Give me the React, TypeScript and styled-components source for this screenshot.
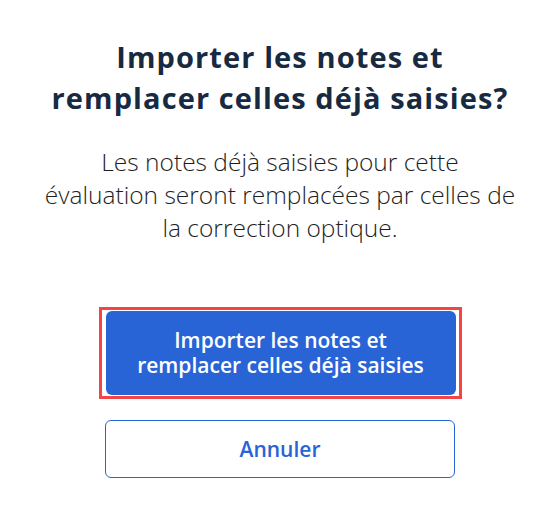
import styled, { createGlobalStyle } from 'styled-components';

const GlobalStyle = createGlobalStyle`
  html, body {
    margin: 0;
    padding: 0;
    background: #ffffff;
  }
  body {
    font-family: "Open Sans", "Liberation Sans", sans-serif;
  }
`;

const App = () => {
  return (
    <>
      <GlobalStyle />
      <Dialog>
        <Title>
          Importer les notes et
          <br />
          remplacer celles déjà saisies?
        </Title>
        <Message>
          Les notes déjà saisies pour cette
          <br />
          évaluation seront remplacées par celles de
          <br />
          la correction optique.
        </Message>
        <Actions>
          <FocusRing>
            <PrimaryBtn>
              Importer les notes et
              <br />
              remplacer celles déjà saisies
            </PrimaryBtn>
          </FocusRing>
          <SecondaryBtn>Annuler</SecondaryBtn>
        </Actions>
      </Dialog>
    </>
  );
};

const Dialog = styled.div`
  width: 560px;
  height: 508px;
  display: flex;
  flex-direction: column;
  align-items: center;
  padding-top: 36px;
  box-sizing: border-box;
`;

const Title = styled.h2`
  margin: 0;
  font-size: 29px;
  line-height: 41px;
  font-weight: 700;
  letter-spacing: 1.1px;
  color: #172a42;
  text-align: center;
`;

const Message = styled.p`
  margin: 27px 0 0;
  font-size: 24.5px;
  line-height: 33px;
  font-weight: 300;
  color: #1e1e1e;
  text-align: center;
`;

const Actions = styled.div`
  display: flex;
  flex-direction: column;
  align-items: center;
  gap: 21px;
  margin-top: 63px;
`;

const FocusRing = styled.div`
  padding: 1px 3px 1px 4px;
  border: 3px solid #f44447;
`;

const BaseBtn = styled.button`
  width: 350px;
  box-sizing: border-box;
  border-radius: 6px;
  font-family: "Open Sans", "Liberation Sans", sans-serif;
  font-size: 21px;
  font-weight: 600;
  line-height: 25px;
  cursor: pointer;
`;

const PrimaryBtn = styled(BaseBtn)`
  display: block;
  height: 84px;
  border: none;
  background: #2864d6;
  color: #ffffff;
`;

const SecondaryBtn = styled(BaseBtn)`
  height: 58px;
  border: 1px solid #2864d6;
  background: #ffffff;
  color: #2864d6;
`;

export default App;
